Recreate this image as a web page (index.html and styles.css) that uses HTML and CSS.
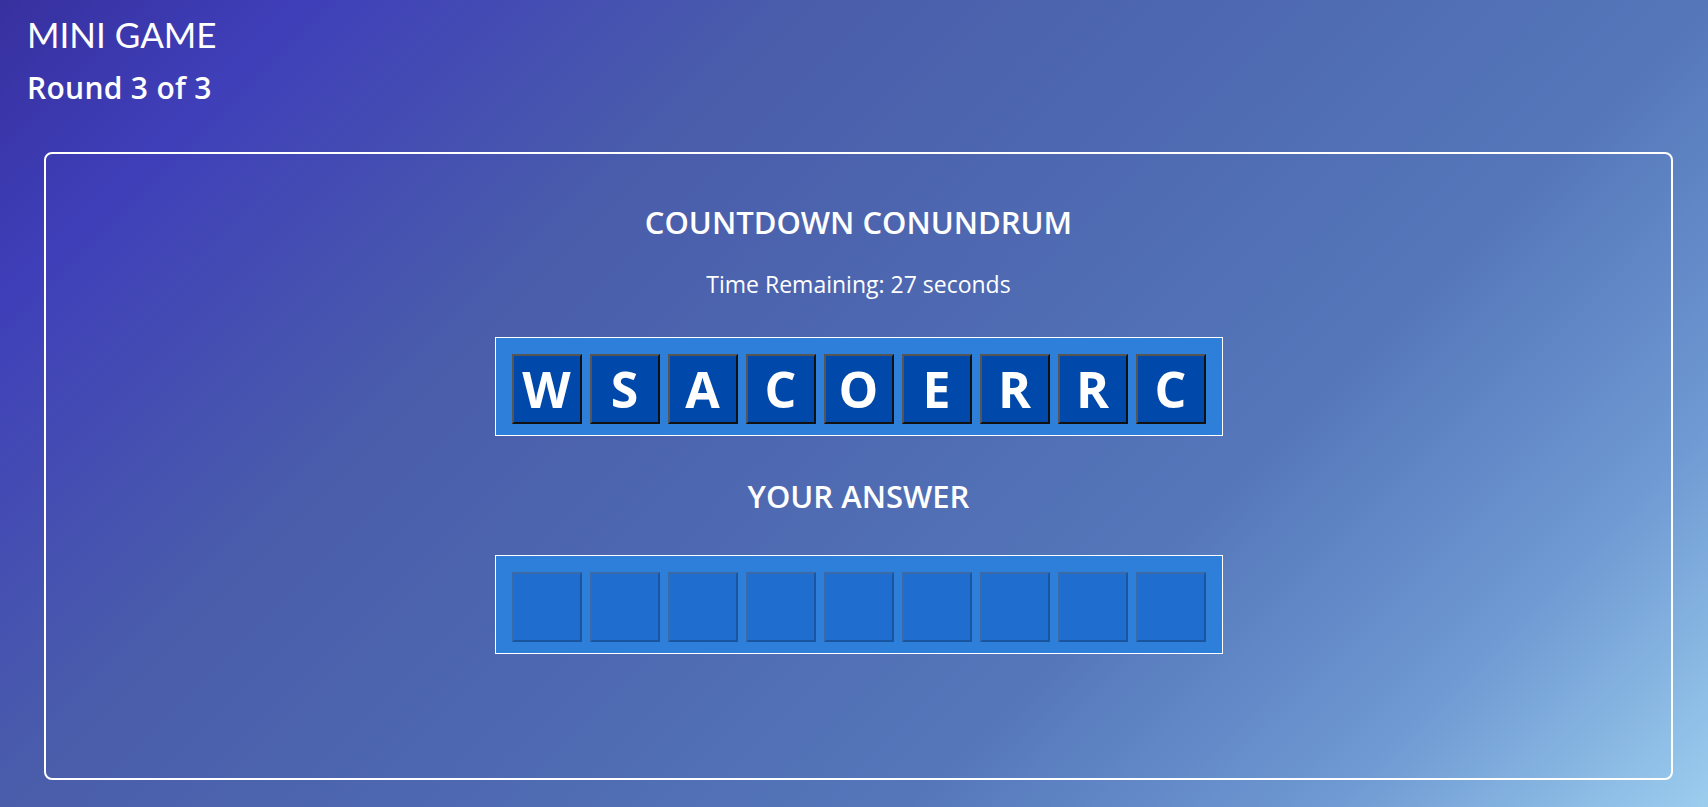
FILE: index.html
```html
<!DOCTYPE html>
<html lang="en">
<head>
<meta charset="utf-8">
<title>Mini Game</title>
<link rel="stylesheet" href="styles.css">
</head>
<body>
<header class="header">
  <h1 class="game-title">MINI GAME</h1>
  <h2 class="round">Round 3 of 3</h2>
</header>
<main class="card">
  <h3 class="section-title">COUNTDOWN CONUNDRUM</h3>
  <p class="timer">Time Remaining: 27 seconds</p>
  <div class="board">
    <div class="tile letter">W</div>
    <div class="tile letter">S</div>
    <div class="tile letter">A</div>
    <div class="tile letter">C</div>
    <div class="tile letter">O</div>
    <div class="tile letter">E</div>
    <div class="tile letter">R</div>
    <div class="tile letter">R</div>
    <div class="tile letter">C</div>
  </div>
  <h3 class="section-title answer-title">YOUR ANSWER</h3>
  <div class="board answer-board">
    <div class="tile empty"></div>
    <div class="tile empty"></div>
    <div class="tile empty"></div>
    <div class="tile empty"></div>
    <div class="tile empty"></div>
    <div class="tile empty"></div>
    <div class="tile empty"></div>
    <div class="tile empty"></div>
    <div class="tile empty"></div>
  </div>
</main>
</body>
</html>
```
FILE: styles.css
```css
html, body {
  margin: 0;
  padding: 0;
  height: 807px;
  overflow: hidden;
}
body {
  font-family: "Open Sans", "Noto Sans", sans-serif;
  color: #fff;
  background: linear-gradient(135deg, #37309f 0%, #3f3fb9 12%, #4a5dab 32%, #4e69b1 50%, #5577ba 68%, #6f9ad3 85%, #9ccdee 100%);
}
.header {
  padding: 12px 0 0 27px;
  height: 140px;
  box-sizing: border-box;
}
.game-title {
  margin: 0;
  font-family: "Lato", sans-serif;
  font-weight: 400;
  font-size: 35px;
  line-height: 44px;
}
.round {
  margin: 14px 0 0 0;
  font-family: "Open Sans", sans-serif;
  font-weight: 600;
  font-size: 30px;
  line-height: 36px;
  letter-spacing: 0.3px;
}
.card {
  margin: 12px 35px 0 44px;
  height: 628px;
  box-sizing: border-box;
  border: 2px solid #fff;
  border-radius: 8px;
  display: flex;
  flex-direction: column;
  align-items: center;
  padding-top: 48px;
}
.section-title {
  margin: 0;
  font-weight: 600;
  font-size: 31px;
  line-height: 40px;
}
.timer {
  margin: 27px 0 0 0;
  font-size: 23px;
  line-height: 30px;
}
.board {
  margin-top: 38px;
  display: flex;
  gap: 8px;
  padding: 16px 16px 11px 16px;
  background: #2e7fd9;
  border: 1px solid #fff;
}
.tile {
  width: 70px;
  height: 70px;
  box-sizing: border-box;
  border: 2px solid;
  display: flex;
  align-items: center;
  justify-content: center;
}
.letter {
  background: #0048aa;
  border-color: #555 #111 #111 #555;
  font-weight: 700;
  font-size: 50px;
  line-height: 1;
}
.empty {
  background: #1f6ecf;
  border-color: #3a6aa8 #1a55a0 #1a55a0 #3a6aa8;
}
.answer-title {
  margin-top: 40px;
}
.answer-board {
  margin-top: 39px;
}
```
